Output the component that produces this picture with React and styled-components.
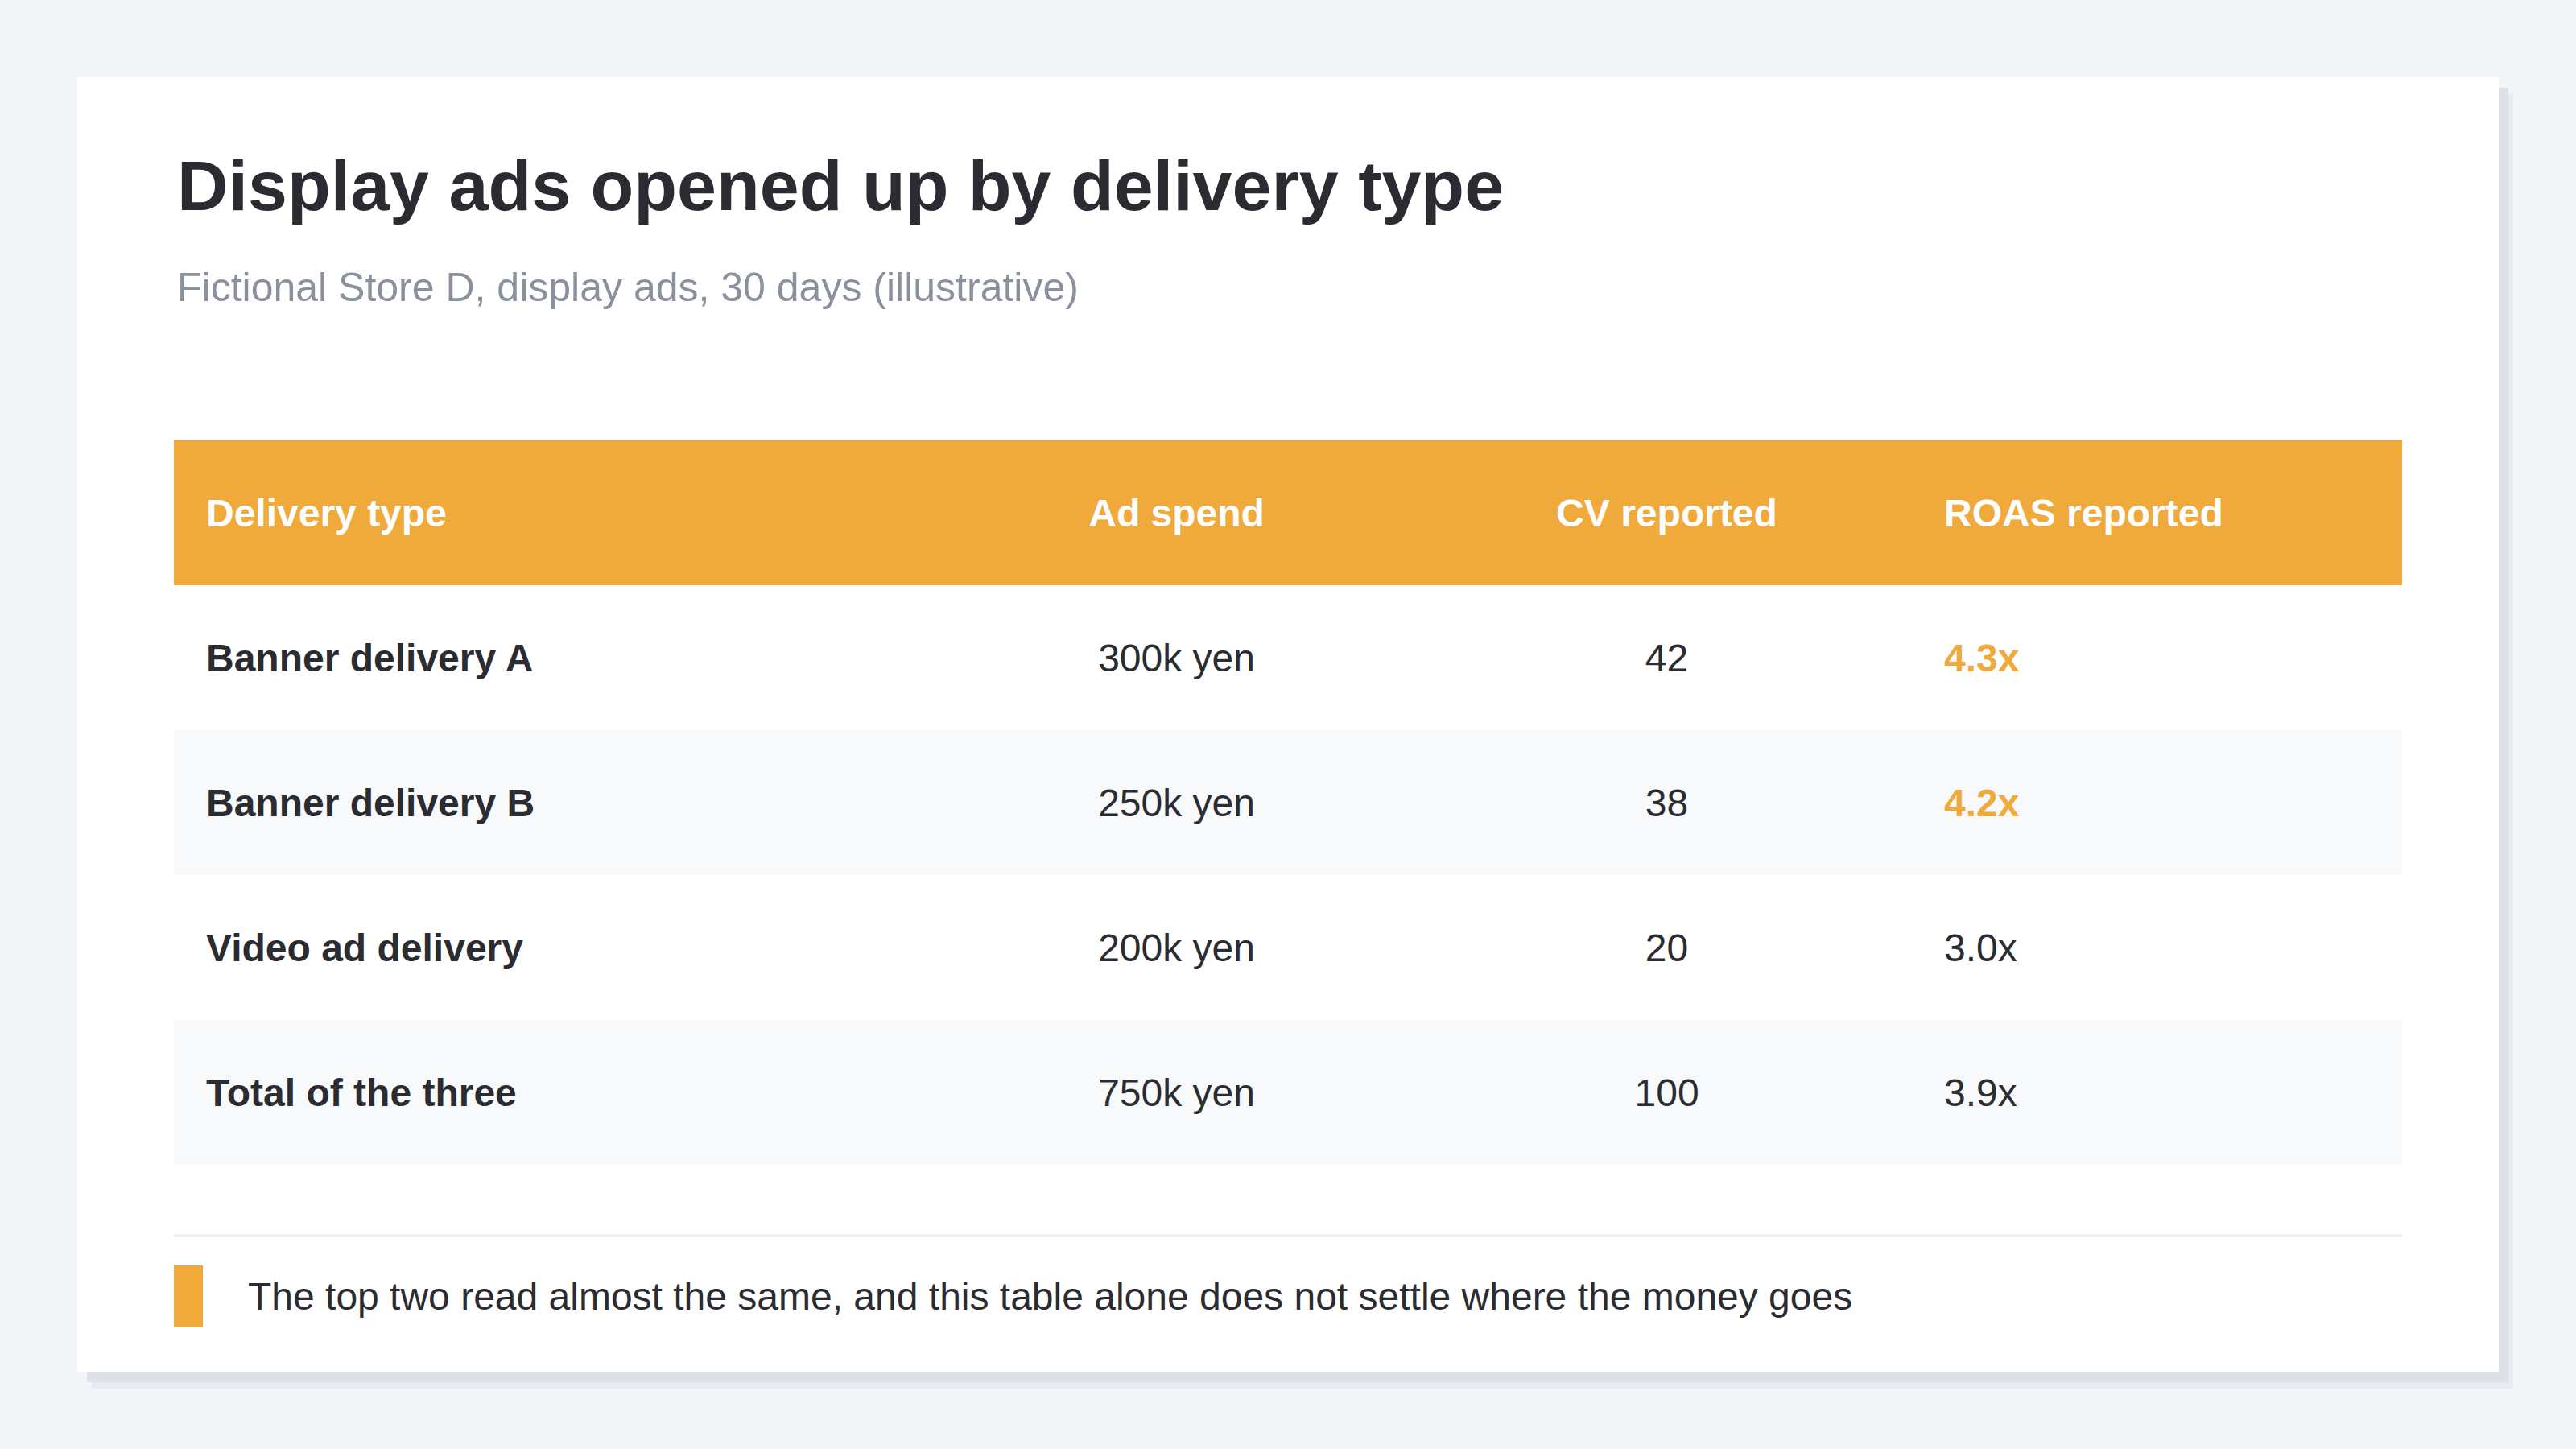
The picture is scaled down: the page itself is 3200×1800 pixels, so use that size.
import React from "react";
import styled, { createGlobalStyle } from "styled-components";

const GlobalStyle = createGlobalStyle`
  html, body {
    margin: 0;
    padding: 0;
    background: #f3f4f8;
  }
  body {
    font-family: "Liberation Sans", Arial, sans-serif;
    color: #2b2c31;
  }
`;

const rows = [
  { name: "Banner delivery A", spend: "300k yen", cv: "42", roas: "4.3x", hot: true },
  { name: "Banner delivery B", spend: "250k yen", cv: "38", roas: "4.2x", hot: true },
  { name: "Video ad delivery", spend: "200k yen", cv: "20", roas: "3.0x" },
  { name: "Total of the three", spend: "750k yen", cv: "100", roas: "3.9x" },
];

function App() {
  return (
    <>
      <GlobalStyle />
      <Page>
        <Card>
          <Title>Display ads opened up by delivery type</Title>
          <Subtitle>Fictional Store D, display ads, 30 days (illustrative)</Subtitle>

          <Table>
            <thead>
              <tr>
                <HeadCell width="34%">Delivery type</HeadCell>
                <HeadCell width="22%" align="center">Ad spend</HeadCell>
                <HeadCell width="22%" align="center">CV reported</HeadCell>
                <HeadCell width="22%">ROAS reported</HeadCell>
              </tr>
            </thead>
            <tbody>
              {rows.map((r) => (
                <Row key={r.name}>
                  <Cell bold>{r.name}</Cell>
                  <Cell align="center">{r.spend}</Cell>
                  <Cell align="center">{r.cv}</Cell>
                  <Cell hot={r.hot}>{r.roas}</Cell>
                </Row>
              ))}
            </tbody>
          </Table>

          <Note>
            <NoteMark />
            <NoteText>
              The top two read almost the same, and this table alone does not settle where the money goes
            </NoteText>
          </Note>
        </Card>
      </Page>
    </>
  );
}

export default App;

const Page = styled.div`
  width: 3200px;
  height: 1800px;
  padding: 96px;
  box-sizing: border-box;
`;

const Card = styled.div`
  background: #ffffff;
  height: 1608px;
  box-sizing: border-box;
  padding: 84px 120px 0;
  box-shadow: 12px 13px 0 #dee0e7, 18px 21px 0 #e9eaf0;
`;

const Title = styled.h1`
  margin: 0;
  font-size: 88px;
  font-weight: 700;
  line-height: normal;
  color: #2b2c31;
  padding-left: 4px;
`;

const Subtitle = styled.p`
  margin: 46px 0 0;
  font-size: 50px;
  line-height: normal;
  color: #8a909c;
  padding-left: 4px;
`;

const Table = styled.table`
  width: 100%;
  margin-top: 161px;
  border-collapse: collapse;
  table-layout: fixed;
`;

const HeadCell = styled.th`
  box-sizing: border-box;
  width: ${(p) => p.width};
  height: 180px;
  padding: 0 40px;
  background: #f0aa3c;
  color: #ffffff;
  font-size: 48px;
  font-weight: 700;
  text-align: ${(p) => p.align || "left"};
`;

const Row = styled.tr`
  &:nth-child(even) {
    background: #f8f9fb;
  }
`;

const Cell = styled.td`
  box-sizing: border-box;
  height: 180px;
  padding: 0 40px;
  font-size: 48px;
  font-weight: ${(p) => (p.bold || p.hot ? 700 : 400)};
  color: ${(p) => (p.hot ? "#f0aa3c" : "#2b2c31")};
  text-align: ${(p) => p.align || "left"};
`;

const Note = styled.div`
  margin-top: 86px;
  border-top: 4px solid #eceff3;
  padding-top: 35px;
  display: flex;
  align-items: center;
  gap: 56px;
`;

const NoteMark = styled.span`
  width: 36px;
  height: 76px;
  background: #f0aa3c;
  flex-shrink: 0;
`;

const NoteText = styled.span`
  font-size: 48px;
  color: #2b2c31;
`;
